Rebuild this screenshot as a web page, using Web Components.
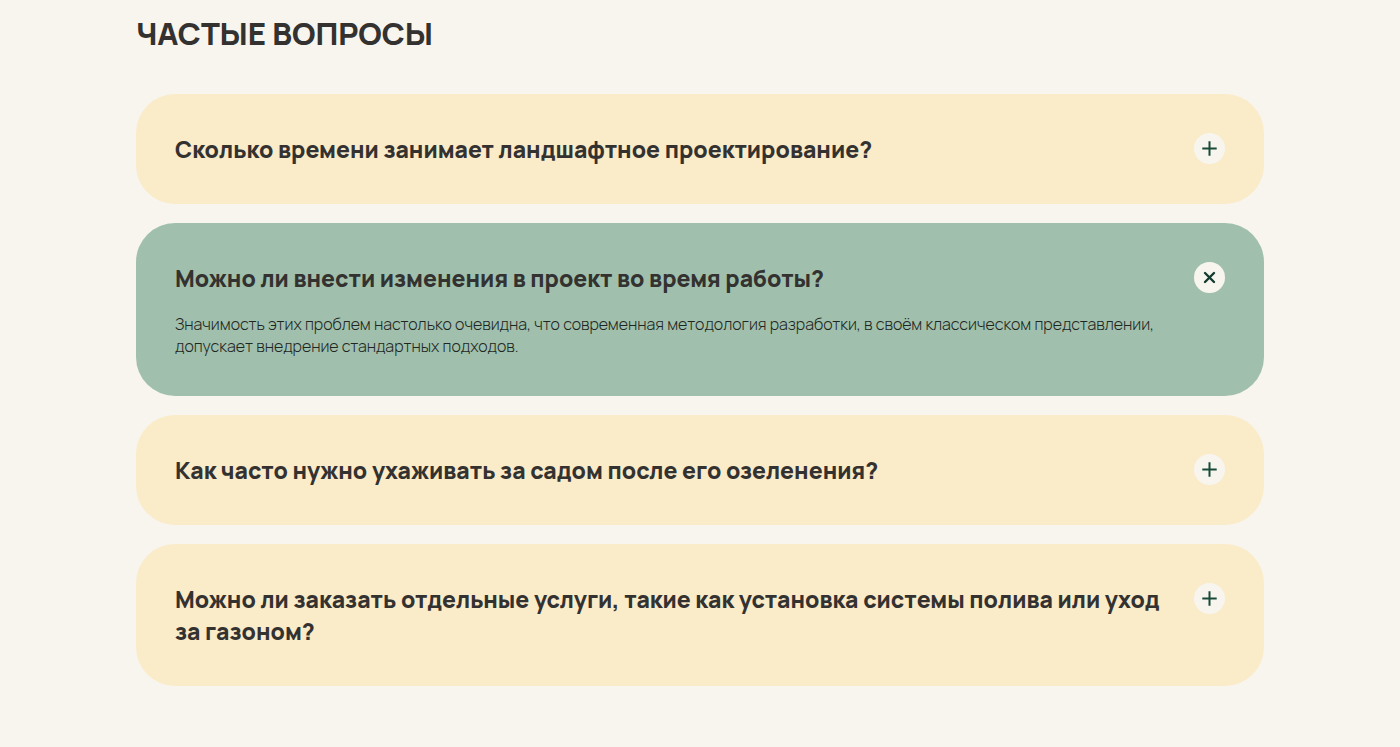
<!DOCTYPE html>
<html lang="ru">
<head>
<meta charset="utf-8">
<meta name="viewport" content="width=device-width, initial-scale=1">
<title>Частые вопросы</title>
<style>
  body {
    margin: 0;
    background: #f8f5ee;
    color: #333230;
    font-family: Manrope, Inter, "Open Sans", sans-serif;
  }
</style>
</head>
<body>
<faq-section>
  <span slot="title">ЧАСТЫЕ ВОПРОСЫ</span>
  <faq-item>
    <span slot="question">Сколько времени занимает ландшафтное проектирование?</span>
  </faq-item>
  <faq-item open>
    <span slot="question">Можно ли внести изменения в проект во время работы?</span>
    <span slot="answer">Значимость этих проблем настолько очевидна, что современная методология разработки, в своём классическом представлении, допускает внедрение стандартных подходов.</span>
  </faq-item>
  <faq-item>
    <span slot="question">Как часто нужно ухаживать за садом после его озеленения?</span>
  </faq-item>
  <faq-item>
    <span slot="question">Можно ли заказать отдельные услуги, такие как установка системы полива или уход за газоном?</span>
  </faq-item>
</faq-section>

<template id="faq-section-template">
  <style>
    :host { display: block; padding: 12px 24px 60px; }
    .inner { max-width: 1128px; margin: 0 auto; }
    h2 { margin: 0 0 40px; font-size: 31px; line-height: 42px; font-weight: 800; }
    .list { display: flex; flex-direction: column; gap: 19px; }
  </style>
  <section class="inner" aria-labelledby="heading">
    <h2 id="heading"><slot name="title"></slot></h2>
    <div class="list"><slot></slot></div>
  </section>
</template>

<template id="faq-item-template">
  <style>
    :host {
      display: block;
      padding: 39px;
      border-radius: 39px;
      background: #faebc9;
    }
    :host([open]) { background: #a0c0ad; }
    h3 { margin: 0; font: inherit; }
    button {
      display: flex;
      align-items: flex-start;
      justify-content: space-between;
      gap: 32px;
      width: 100%;
      padding: 0;
      border: 0;
      background: none;
      color: inherit;
      font: inherit;
      font-size: 23px;
      line-height: 32px;
      font-weight: 800;
      text-align: left;
      cursor: pointer;
    }
    svg { flex: none; display: block; width: 31px; height: 31px; }
    circle { fill: #f8f5ee; }
    path { fill: none; stroke: #174a37; stroke-width: 2; }
    .close { display: none; stroke: #133c2e; stroke-width: 2.4; stroke-linecap: round; }
    :host([open]) .plus { display: none; }
    :host([open]) .close { display: inline; }
    p { display: none; margin: 19px 48px 0 0; color: #1e2622; font-size: 16px; line-height: 22px; font-weight: 300; }
    :host([open]) p { display: block; }
  </style>
  <h3>
    <button type="button" aria-controls="answer">
      <slot name="question"></slot>
      <svg viewBox="0 0 31 31" aria-hidden="true">
        <circle cx="15.5" cy="15.5" r="15.5"/>
        <path class="plus" d="M15.5 8.3v14.4M8.3 15.5h14.4"/>
        <path class="close" d="M11 11l9 9M20 11l-9 9"/>
      </svg>
    </button>
  </h3>
  <p id="answer"><slot name="answer"></slot></p>
</template>

<script>
  class FaqSection extends HTMLElement {
    constructor() {
      super();
      const template = document.getElementById('faq-section-template');
      this.attachShadow({ mode: 'open' }).append(template.content.cloneNode(true));
    }
  }

  class FaqItem extends HTMLElement {
    static observedAttributes = ['open'];

    constructor() {
      super();
      const template = document.getElementById('faq-item-template');
      this.attachShadow({ mode: 'open' }).append(template.content.cloneNode(true));
      this.button = this.shadowRoot.querySelector('button');
      this.button.addEventListener('click', () => this.toggleAttribute('open'));
      this.syncState();
    }

    attributeChangedCallback() {
      this.syncState();
    }

    syncState() {
      this.button.setAttribute('aria-expanded', String(this.hasAttribute('open')));
    }
  }

  customElements.define('faq-section', FaqSection);
  customElements.define('faq-item', FaqItem);
</script>
</body>
</html>
